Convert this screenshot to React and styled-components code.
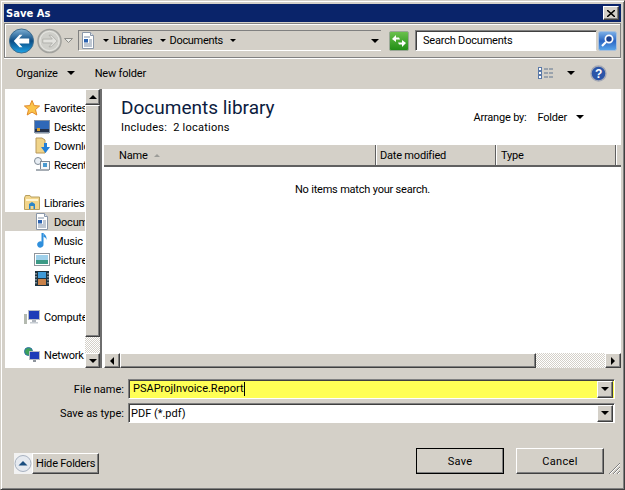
import React from 'react';
import styled, { createGlobalStyle, css } from 'styled-components';

const GlobalStyle = createGlobalStyle`
  html, body {
    margin: 0;
    padding: 0;
    background: #d4d0c8;
  }
  * {
    box-sizing: border-box;
  }
`;

const raised = css`
  background: #d4d0c8;
  border: 1px solid;
  border-color: #fff #404040 #404040 #fff;
  box-shadow: inset -1px -1px 0 #808080;
`;

const Arrow = ({ dir = 'down', size = 4, color = '#000' }) => {
  const points = {
    down: `0,0 ${size * 2},0 ${size},${size}`,
    up: `0,${size} ${size * 2},${size} ${size},0`,
    left: `${size},0 ${size},${size * 2} 0,${size}`,
    right: `0,0 0,${size * 2} ${size},${size}`,
  }[dir];
  const horizontal = dir === 'left' || dir === 'right';
  return (
    <svg width={horizontal ? size : size * 2} height={horizontal ? size * 2 : size} style={{ display: 'block', flex: 'none' }}>
      <polygon points={points} fill={color} />
    </svg>
  );
};

const BackIcon = () => (
  <svg width="25" height="26" viewBox="0 0 26 26">
    <defs>
      <linearGradient id="backFill" x1="0" y1="0" x2="0" y2="1">
        <stop offset="0" stopColor="#7fb0d4" />
        <stop offset="0.5" stopColor="#0b4c84" />
        <stop offset="1" stopColor="#1fa4e8" />
      </linearGradient>
    </defs>
    <circle cx="13" cy="13" r="12.5" fill="url(#backFill)" stroke="#3a6a8c" />
    <path d="M5 13 L11 6.5 L14 6.5 L10.5 10.5 H21 V15.5 H10.5 L14 19.5 L11 19.5 Z" fill="#fff" />
  </svg>
);

const ForwardIcon = () => (
  <svg width="25" height="26" viewBox="0 0 26 26">
    <circle cx="13" cy="13" r="12" fill="#cfcfca" stroke="#a2a29e" strokeWidth="1.6" />
    <circle cx="13" cy="13" r="10" fill="none" stroke="#e8e8e4" />
    <path d="M21 13 L15 7 L12.5 7 L16 11 H6 V15 H16 L12.5 19 L15 19 Z" fill="#e2e2de" stroke="#a8a8a4" strokeWidth=".8" />
  </svg>
);

const PageIcon = ({ size = 16 }) => (
  <svg width={size} height={size + 1} viewBox="0 0 16 17">
    <path d="M2.5 .5 H10.5 L13.5 3.5 V16.5 H2.5 Z" fill="#fff" stroke="#8a97a8" />
    <path d="M10.5 .5 V3.5 H13.5" fill="#dfe6ee" stroke="#8a97a8" />
    <path d="M4 5 H10 M4 12 H12 M4 14 H12" stroke="#7f8fa5" />
    <rect x="4" y="7" width="4" height="3.5" fill="#2a62b0" />
    <path d="M9 8 H12 M9 10 H12" stroke="#7f8fa5" />
  </svg>
);

const RefreshIcon = () => (
  <svg width="20" height="20" viewBox="0 0 20 20">
    <defs>
      <linearGradient id="refreshFill" x1="0" y1="0" x2="0" y2="1">
        <stop offset="0" stopColor="#6cc24e" />
        <stop offset="1" stopColor="#1f8d14" />
      </linearGradient>
    </defs>
    <rect x=".5" y=".5" width="19" height="19" rx="1.5" fill="url(#refreshFill)" stroke="#9aa896" />
    <path d="M3 8 L7 4 V6.5 H10 L11 8.5 H7 V11 Z" fill="#fff" />
    <path d="M17 12 L13 16 V13.5 H10 L9 11.5 H13 V9 Z" fill="#fff" />
  </svg>
);

const SearchGlass = () => (
  <svg width="19" height="20" viewBox="0 0 19 20">
    <defs>
      <linearGradient id="searchFill" x1="0" y1="0" x2="0" y2="1">
        <stop offset="0" stopColor="#7fb2e8" />
        <stop offset="0.5" stopColor="#2a66c4" />
        <stop offset="1" stopColor="#5ba8ec" />
      </linearGradient>
    </defs>
    <rect x=".5" y=".5" width="18" height="19" rx="2" fill="url(#searchFill)" stroke="#a8c0dc" />
    <circle cx="11" cy="8" r="3.6" fill="#1a3f8c" stroke="#fff" strokeWidth="1.7" />
    <path d="M8 11 L4 15" stroke="#fff" strokeWidth="2.2" />
  </svg>
);

const ViewsIcon = () => (
  <svg width="16" height="13" viewBox="0 0 16 13">
    <rect x=".5" y=".5" width="3" height="3" fill="#fff" stroke="#5a79a8" />
    <rect x=".5" y="4.5" width="3" height="3" fill="#fff" stroke="#5a79a8" />
    <rect x=".5" y="8.5" width="3" height="3" fill="#fff" stroke="#5a79a8" />
    <path d="M6 2 H15 M6 6 H15 M6 10 H15" stroke="#5f7590" strokeDasharray="4 1" />
  </svg>
);

const HelpIcon = () => (
  <svg width="17" height="17" viewBox="0 0 17 17">
    <circle cx="8.5" cy="8.5" r="7.5" fill="#2b55a8" stroke="#a4a8b4" strokeWidth="1.4" />
    <text x="8.5" y="13" textAnchor="middle" fontFamily="Liberation Sans, sans-serif" fontWeight="700" fontSize="12" fill="#fff">?</text>
  </svg>
);

const StarIcon = () => (
  <svg width="16" height="16" viewBox="0 0 16 16">
    <path d="M8 .5 L10.2 5.6 L15.6 6 L11.5 9.6 L12.8 15 L8 12.1 L3.2 15 L4.5 9.6 L.4 6 L5.8 5.6 Z" fill="#fbc44a" stroke="#e0892a" />
  </svg>
);

const DesktopIcon = () => (
  <svg width="16" height="14" viewBox="0 0 16 14">
    <rect x=".5" y=".5" width="15" height="12" fill="#2f68b8" stroke="#8494a8" />
    <rect x="1" y="9" width="14" height="3" fill="#26324a" />
    <rect x="3" y="8" width="3" height="3" fill="#d8a02e" />
    <path d="M1 13.5 H15" stroke="#b8bec6" />
  </svg>
);

const DownloadsIcon = () => (
  <svg width="16" height="17" viewBox="0 0 16 17">
    <path d="M2 1 H8 L11 3 V16 H2 Z" fill="#f0d48a" stroke="#b8985a" />
    <path d="M10 6 H13 V10 H16 L11.5 16 L7 10 H10 Z" fill="#2480d8" />
  </svg>
);

const RecentIcon = () => (
  <svg width="16" height="15" viewBox="0 0 16 15">
    <circle cx="4" cy="4" r="3.5" fill="#e8eef4" stroke="#7f8a96" />
    <rect x="6.5" y="4.5" width="9" height="8" fill="#f4f6f8" stroke="#7f8a96" />
    <rect x="9" y="6" width="4" height="4" fill="#4a9ad0" />
    <rect x="2" y="12" width="13" height="2" fill="#a6adb4" />
  </svg>
);

const LibrariesIcon = () => (
  <svg width="16" height="15" viewBox="0 0 16 15">
    <path d="M.5 3 V14.5 H15.5 V2 H7 L6 .5 H1.5 Z" fill="#f3d68c" stroke="#b8a060" />
    <rect x="2" y="4" width="12" height="2" fill="#fff5d2" />
    <path d="M5 14 V9 L8 7 L11 9 V14 H9.5 V11 H6.5 V14 Z" fill="#2c86c8" />
  </svg>
);

const MusicIcon = () => (
  <svg width="16" height="17" viewBox="0 0 16 17">
    <path d="M9.5 1 V12 A3.2 3.2 0 1 1 7.5 9.5 V1 Z" fill="#2f8fdc" />
    <path d="M9.5 1 C11 3 13 4 12.5 8 C12 6 11 5 9.5 5 Z" fill="#2f8fdc" />
  </svg>
);

const PicturesIcon = () => (
  <svg width="16" height="13" viewBox="0 0 16 13">
    <rect x=".5" y=".5" width="15" height="12" fill="#fff" stroke="#8f959c" />
    <rect x="2" y="2" width="12" height="5" fill="#9ed0ea" />
    <rect x="2" y="7" width="12" height="4" fill="#3c9a86" />
  </svg>
);

const VideosIcon = () => (
  <svg width="14" height="15" viewBox="0 0 14 15">
    <rect width="14" height="15" fill="#1d3340" />
    <rect x="3" y="1" width="8" height="6" fill="#3f9bd8" />
    <rect x="3" y="8" width="8" height="6" fill="#c9824a" />
    <path d="M1 2 V14 M13 2 V14" stroke="#d8e0e4" strokeDasharray="1.5 1.5" />
  </svg>
);

const ComputerIcon = () => (
  <svg width="16" height="14" viewBox="0 0 16 14">
    <rect y="4" width="3" height="10" fill="#b4bab0" />
    <rect x="4.5" y=".5" width="11" height="9" fill="#1c3cb8" stroke="#b6bcc4" />
    <rect x="8" y="10" width="4" height="2" fill="#aeb4bc" />
    <rect x="6" y="12" width="8" height="1.5" fill="#c6ccd2" />
  </svg>
);

const NetworkIcon = () => (
  <svg width="16" height="16" viewBox="0 0 16 16">
    <circle cx="4.5" cy="4.5" r="4" fill="#3ca05a" stroke="#2d6fa8" />
    <rect x="5.5" y="4.5" width="10" height="8" fill="#1c3cb8" stroke="#b6bcc4" />
    <rect x="9" y="13" width="3" height="2" fill="#8e949c" />
  </svg>
);

const HideIcon = () => (
  <svg width="18" height="21" viewBox="0 0 18 21">
    <rect width="18" height="21" fill="#f2f2f2" />
    <circle cx="9" cy="10.5" r="8" fill="#e6eaf0" stroke="#a8b2c0" />
    <path d="M4.5 12.5 L9 8 L13.5 12.5 Z" fill="#1a4e80" />
  </svg>
);

const Grip = () => (
  <svg width="12" height="12" viewBox="0 0 12 12">
    <path d="M12 1 L1 12 M12 5 L5 12 M12 9 L9 12" stroke="#808080" strokeWidth="1" />
    <path d="M12 2 L2 12 M12 6 L6 12 M12 10 L10 12" stroke="#fff" strokeWidth="1" />
  </svg>
);

const Window = styled.div`
  width: 625px;
  height: 490px;
  display: flex;
  flex-direction: column;
  background: #d4d0c8;
  border: 1px solid;
  border-color: #d4d0c8 #404040 #404040 #d4d0c8;
  box-shadow: inset 1px 1px 0 #fff, inset -1px -1px 0 #808080;
  padding: 3px;
  font-family: Roboto, "Liberation Sans", sans-serif;
  font-size: 11px;
  letter-spacing: -0.2px;
  color: #000;
  overflow: hidden;
`;

const TitleBar = styled.div`
  height: 18px;
  flex: none;
  background: #0a246a;
  display: flex;
  align-items: center;
  justify-content: space-between;
  padding: 0 2px 0 2px;
  color: #fff;
  font-family: "DejaVu Sans", sans-serif;
  font-weight: 700;
  font-size: 10px;
  letter-spacing: 0;
`;

const CloseButton = styled.div`
  ${raised}
  width: 16px;
  height: 14px;
  display: flex;
  align-items: center;
  justify-content: center;
`;

const AddressBar = styled.div`
  height: 35px;
  flex: none;
  margin-top: 1px;
  border: 1px solid #808080;
  box-shadow: inset 1px 1px 0 #fff, 0 1px 0 #fff;
  display: flex;
  align-items: center;
  padding-left: 4px;
`;

const NavButtons = styled.div`
  display: flex;
  align-items: center;
  gap: 3px;
`;

const HistoryDrop = styled.div`
  margin: 0 5px 0 -1px;
`;

const Crumbs = styled.div`
  width: 303px;
  height: 21px;
  display: flex;
  align-items: center;
  border-left: 1px solid #808080;
  border-top: 1px solid #808080;
  border-bottom: 1px solid #fff;
  padding-left: 1px;
  margin-right: 8px;
`;

const CrumbIcon = styled.div`
  height: 17px;
  margin-right: 7px;
`;

const Crumb = styled.span`
  margin: 0 7px 0 4px;
  line-height: 14px;
  letter-spacing: -0.3px;
`;

const CrumbSpacer = styled.div`
  flex: 1;
`;

const CrumbDrop = styled.div`
  margin-right: 2px;
`;

const RefreshBox = styled.div`
  margin-right: 6px;
  height: 20px;
`;

const SearchBox = styled.div`
  width: 182px;
  height: 21px;
  background: #fff;
  border: 1px solid;
  border-color: #808080 #d4d0c8 #fff #808080;
  box-shadow: inset 1px 1px 0 #404040;
  padding-left: 7px;
  display: flex;
  align-items: center;
  margin-right: 1px;
`;

const SearchButton = styled.div`
  height: 20px;
`;

const CommandBar = styled.div`
  height: 31px;
  flex: none;
  display: flex;
  align-items: center;
  padding: 0 0 1px 12px;
`;

const CommandLabel = styled.span``;

const CommandDrop = styled.div`
  margin-right: 20px;
  margin-left: 9px;
`;

const CommandSpacer = styled.div`
  flex: 1;
`;

const ViewDrop = styled.div`
  margin: 0 15px 0 13px;
`;

const HelpBox = styled.div`
  height: 17px;
  margin-right: 14px;
`;

const Panes = styled.div`
  height: 279px;
  flex: none;
  display: flex;
`;

const NavColumn = styled.div`
  width: 97px;
  flex: none;
  display: flex;
  background: #fff;
  margin-left: 1px;
`;

const NavTree = styled.div`
  width: 80px;
  overflow: hidden;
  padding-top: 9px;
`;

const NavRow = styled.div`
  height: 19px;
  display: flex;
  align-items: center;
  white-space: nowrap;
  background: ${(p) => (p.$selected ? '#d4d0c8' : 'transparent')};
  padding-left: ${(p) => (p.$child ? 29 : 19)}px;
  margin-bottom: ${(p) => (p.$last ? 19 : 0)}px;
`;

const NavIconBox = styled.div`
  width: 16px;
  height: 17px;
  flex: none;
  display: flex;
  align-items: center;
  justify-content: center;
  margin-right: 4px;
`;

const NavLabel = styled.span`
  padding-top: 1px;
`;

const VScroll = styled.div`
  width: 17px;
  flex: none;
  display: flex;
  flex-direction: column;
  border-right: 2px solid #6e6e6e;
  background: #d4d0c8;
`;

const ScrollButton = styled.div`
  ${raised}
  width: ${(p) => (p.$narrow ? 15 : 16)}px;
  height: ${(p) => (p.$tall ? 15 : 16)}px;
  flex: none;
  display: flex;
  align-items: center;
  justify-content: center;
`;

const ScrollThumb = styled.div`
  ${raised}
  ${(p) => (p.$horizontal ? 'width: 416px; height: 100%;' : 'height: 232px;')}
  flex: none;
`;

const ScrollTrack = styled.div`
  flex: 1;
  background-color: #fff;
  background-image: conic-gradient(#d4d0c8 25%, #fff 0 50%, #d4d0c8 0 75%, #fff 0);
  background-size: 2px 2px;
`;

const MainPane = styled.div`
  flex: 1;
  display: flex;
  flex-direction: column;
  background: #fff;
  padding-left: 2px;
`;

const LibraryHead = styled.div`
  height: 56px;
  flex: none;
  display: flex;
  justify-content: space-between;
  padding: 6px 0 0 17px;
`;

const LibraryTitle = styled.div`
  font-size: 19px;
  letter-spacing: 0;
  line-height: 25px;
  color: #0c1c40;
`;

const LibraryMeta = styled.div`
  line-height: 15px;
  letter-spacing: 0.25px;
`;

const ArrangeBy = styled.div`
  display: flex;
  align-items: center;
  height: 16px;
  margin: 14px 37px 0 0;
`;

const ArrangeValue = styled.span`
  margin: 0 9px 0 11px;
`;

const ColumnHeader = styled.div`
  height: 22px;
  flex: none;
  display: flex;
  background: #d4d0c8;
  border-bottom: 2px solid #606060;
`;

const Column = styled.div`
  width: ${(p) => p.$width}px;
  flex: none;
  display: flex;
  align-items: center;
  padding-left: ${(p) => p.$pad}px;
  padding-top: 1px;
  border-right: 1px solid #606060;
  box-shadow: 1px 0 0 #fff;
  margin-right: 1px;
`;

const SortMark = styled.div`
  margin-left: 6px;
`;

const EmptyList = styled.div`
  flex: 1;
  text-align: center;
  padding-top: 15px;
  line-height: 15px;
`;

const HScroll = styled.div`
  height: 15px;
  flex: none;
  display: flex;
`;

const FormArea = styled.div`
  flex: 1;
  display: flex;
  flex-direction: column;
  padding-top: 11px;
  letter-spacing: 0;
`;

const FieldRow = styled.div`
  display: flex;
  align-items: center;
  height: 20px;
  margin-bottom: 4px;
`;

const FieldLabel = styled.label`
  width: 120px;
  text-align: right;
  flex: none;
`;

const FieldBox = styled.div`
  width: 487px;
  height: 20px;
  margin-left: 4px;
  display: flex;
  align-items: center;
  justify-content: space-between;
  background: ${(p) => p.$bg};
  border: 1px solid;
  border-color: #808080 #fff #fff #808080;
  box-shadow: inset 1px 1px 0 #404040;
  padding-left: ${(p) => p.$pad}px;
`;

const Caret = styled.span`
  width: 1px;
  height: 14px;
  background: #000;
  display: inline-block;
  vertical-align: middle;
`;

const ComboDrop = styled.div`
  ${raised}
  width: 16px;
  height: 17px;
  margin: 0 1px 0 0;
  display: flex;
  align-items: center;
  justify-content: center;
`;

const ButtonRow = styled.div`
  display: flex;
  align-items: flex-end;
  margin-top: 21px;
  padding-left: 10px;
`;

const HideFolders = styled.div`
  display: flex;
  align-items: center;
  height: 21px;
  width: 85px;
  white-space: nowrap;
`;

const HideLabel = styled.div`
  ${raised}
  flex: 1;
  height: 21px;
  display: flex;
  align-items: center;
  padding-left: 3px;
  letter-spacing: -0.2px;
`;

const ActionButton = styled.div`
  ${raised}
  width: 88px;
  height: 26px;
  display: flex;
  align-items: center;
  justify-content: center;
  letter-spacing: 0.3px;
  margin-left: ${(p) => p.$left}px;
  ${(p) => p.$primary && 'outline: 1px solid #000; outline-offset: -1px;'}
`;

const GripBox = styled.div`
  margin-left: auto;
  height: 12px;
  margin-right: 1px;
`;

const navItems = [
  { label: 'Favorites', Icon: StarIcon },
  { label: 'Desktop', Icon: DesktopIcon, child: true },
  { label: 'Downloads', Icon: DownloadsIcon, child: true },
  { label: 'Recent Places', Icon: RecentIcon, child: true, last: true },
  { label: 'Libraries', Icon: LibrariesIcon },
  { label: 'Documents', Icon: PageIcon, child: true, selected: true },
  { label: 'Music', Icon: MusicIcon, child: true },
  { label: 'Pictures', Icon: PicturesIcon, child: true },
  { label: 'Videos', Icon: VideosIcon, child: true, last: true },
  { label: 'Computer', Icon: ComputerIcon, last: true },
  { label: 'Network', Icon: NetworkIcon },
];

const App = () => (
  <>
    <GlobalStyle />
    <Window>
      <TitleBar>
        <span>Save As</span>
        <CloseButton>
          <svg width="8" height="7" viewBox="0 0 8 7">
            <path d="M0 0 L8 7 M8 0 L0 7" stroke="#000" strokeWidth="1.5" />
          </svg>
        </CloseButton>
      </TitleBar>

      <AddressBar>
        <NavButtons>
          <BackIcon />
          <ForwardIcon />
          <HistoryDrop>
            <svg width="9" height="5" style={{ display: 'block' }}><polygon points="0.5,0.5 8.5,0.5 4.5,4.5" fill="#e8e8e4" stroke="#8c8c88" /></svg>
          </HistoryDrop>
        </NavButtons>
        <Crumbs>
          <CrumbIcon><PageIcon /></CrumbIcon>
          <Arrow size={3} />
          <Crumb>Libraries</Crumb>
          <Arrow size={3} />
          <Crumb>Documents</Crumb>
          <Arrow size={3} />
          <CrumbSpacer />
          <CrumbDrop><Arrow size={4} /></CrumbDrop>
        </Crumbs>
        <RefreshBox><RefreshIcon /></RefreshBox>
        <SearchBox>Search Documents</SearchBox>
        <SearchButton><SearchGlass /></SearchButton>
      </AddressBar>

      <CommandBar>
        <CommandLabel>Organize</CommandLabel>
        <CommandDrop><Arrow size={4} /></CommandDrop>
        <CommandLabel>New folder</CommandLabel>
        <CommandSpacer />
        <ViewsIcon />
        <ViewDrop><Arrow size={4} /></ViewDrop>
        <HelpBox><HelpIcon /></HelpBox>
      </CommandBar>

      <Panes>
        <NavColumn>
          <NavTree>
            {navItems.map(({ label, Icon, child, selected, last }) => (
              <NavRow key={label} $child={child} $selected={selected} $last={last}>
                <NavIconBox><Icon /></NavIconBox>
                <NavLabel>{label}</NavLabel>
              </NavRow>
            ))}
          </NavTree>
          <VScroll>
            <ScrollButton $narrow><Arrow dir="up" size={4} /></ScrollButton>
            <ScrollThumb />
            <ScrollTrack />
            <ScrollButton $narrow $tall><Arrow dir="down" size={4} /></ScrollButton>
          </VScroll>
        </NavColumn>

        <MainPane>
          <LibraryHead>
            <div>
              <LibraryTitle>Documents library</LibraryTitle>
              <LibraryMeta>Includes:&nbsp; 2 locations</LibraryMeta>
            </div>
            <ArrangeBy>
              Arrange by:
              <ArrangeValue>Folder</ArrangeValue>
              <Arrow size={4} />
            </ArrangeBy>
          </LibraryHead>
          <ColumnHeader>
            <Column $width={272} $pad={15}>
              Name
              <SortMark><Arrow dir="up" size={3} color="#9c9c98" /></SortMark>
            </Column>
            <Column $width={119} $pad={3}>Date modified</Column>
            <Column $width={119} $pad={4}>Type</Column>
          </ColumnHeader>
          <EmptyList>No items match your search.</EmptyList>
          <HScroll>
            <ScrollButton $tall><Arrow dir="left" size={4} /></ScrollButton>
            <ScrollThumb $horizontal />
            <ScrollTrack />
            <ScrollButton $tall><Arrow dir="right" size={4} /></ScrollButton>
          </HScroll>
        </MainPane>
      </Panes>

      <FormArea>
        <FieldRow>
          <FieldLabel>File name:</FieldLabel>
          <FieldBox $bg="#ffff55" $pad={4}>
            <span>PSAProjInvoice.Report<Caret /></span>
            <ComboDrop><Arrow size={4} /></ComboDrop>
          </FieldBox>
        </FieldRow>
        <FieldRow>
          <FieldLabel>Save as type:</FieldLabel>
          <FieldBox $bg="#fff" $pad={2}>
            <span>PDF (*.pdf)</span>
            <ComboDrop><Arrow size={4} /></ComboDrop>
          </FieldBox>
        </FieldRow>
        <ButtonRow>
          <HideFolders>
            <HideIcon />
            <HideLabel>Hide Folders</HideLabel>
          </HideFolders>
          <ActionButton $primary $left={317}>Save</ActionButton>
          <ActionButton $left={12}>Cancel</ActionButton>
          <GripBox><Grip /></GripBox>
        </ButtonRow>
      </FormArea>
    </Window>
  </>
);

export default App;
